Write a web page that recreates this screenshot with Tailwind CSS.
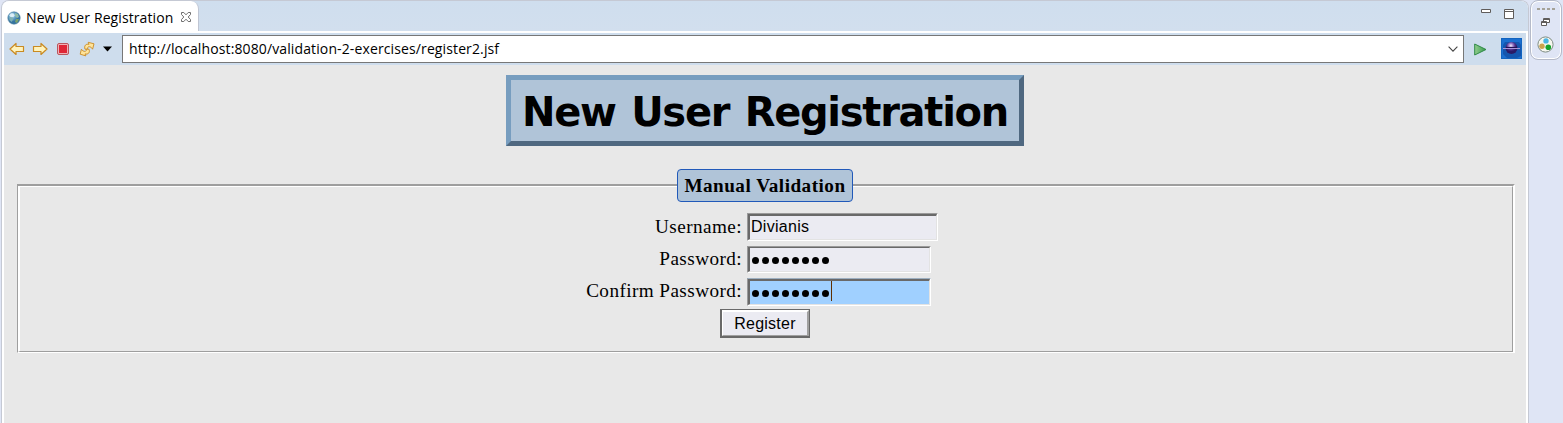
<!DOCTYPE html>
<html lang="en">
<head>
<meta charset="utf-8">
<title>New User Registration</title>
<script src="https://cdn.jsdelivr.net/npm/@tailwindcss/browser@4"></script>
</head>
<body class="h-[423px] w-[1563px] overflow-hidden bg-[#dfe5f5] text-black">
<div class="flex h-full">
  <main class="ml-px h-full w-[1528px] shrink-0 overflow-hidden rounded-t-[8px] border-x border-t border-[#c5c9d4] bg-white">
    <!-- Tab strip -->
    <header class="flex h-[30px] justify-between bg-linear-to-b from-[#cfdeee] to-[#d2dfee]">
      <div class="flex h-[30px] w-[197px] items-center rounded-tr-[8px] border-r border-[#bfc5d3] bg-white pt-[3px] pl-[5px]">
        <svg class="size-[14px] shrink-0" viewBox="0 0 14 14"><defs><radialGradient id="g" cx=".35" cy=".3"><stop offset="0" stop-color="#d8eef9"/><stop offset=".5" stop-color="#6ba6cc"/><stop offset="1" stop-color="#34739f"/></radialGradient></defs><circle cx="7" cy="7" r="6.2" fill="url(#g)" stroke="#4e7f9f" stroke-width=".6"/><path d="M8 2l3 1 1 3-2 1-2-2z" fill="#8fb9a6"/><path d="M2.5 6l3 0 1 2-2 3-2-2z" fill="#7fb0b4"/><path d="M9 8l3 0-2 4-2-1z" fill="#7da36b"/><ellipse cx="5" cy="4.3" rx="2.5" ry="2" fill="#e4f3fa" opacity=".8"/></svg>
        <span id="tab" class="ml-[5px] w-[149px] shrink-0 font-['Open_Sans',sans-serif] text-[14px] leading-[20px] tracking-[0.1px] whitespace-nowrap">New User Registration</span>
        <svg class="-mt-[2px] ml-[5px] size-[12px] shrink-0" viewBox="0 0 12 12" fill="none" stroke="#6e6e6e"><path d="M1.5 1.5h2.3L6 3.8l2.2-2.3h2.3v2L8.2 6l2.3 2.5v2H8.2L6 8.2l-2.2 2.3H1.5v-2L3.8 6 1.5 3.5z"/></svg>
      </div>
      <div class="flex gap-[13px] pt-[8px] pr-[13px]">
        <svg class="h-[12px] w-[10px]" viewBox="0 0 10 12" fill="#fff" stroke="#5f5c5a"><path d="M.5 .5h9v3h-9z"/></svg>
        <svg class="h-[12px] w-[11px]" viewBox="0 0 11 12" fill="#fff" stroke="#5f5c5a"><path d="M.5 .5h9v9H.5zM.5 2.5h9"/></svg>
      </div>
    </header>
    <!-- Address toolbar -->
    <div class="mx-[2px] mt-[2px] flex h-[32px] items-center bg-[#cedded]">
      <svg class="ml-[5px] h-[14px] w-[16px] shrink-0" viewBox="0 0 16 14"><path d="M1 7L7 1.5V4.5H14.5V9.5H7V12.5z" fill="#fff3bb" stroke="#c98a22" stroke-width="1.2" stroke-linejoin="round"/></svg>
      <svg class="ml-[7px] h-[14px] w-[16px] shrink-0" viewBox="0 0 16 14"><path d="M15 7L9 1.5V4.5H1.5V9.5H9V12.5z" fill="#fff3bb" stroke="#c98a22" stroke-width="1.2" stroke-linejoin="round"/></svg>
      <svg class="ml-[9px] size-[12px] shrink-0" viewBox="0 0 12 12"><rect x=".5" y=".5" width="11" height="11" rx="1.5" fill="#efb1b6" stroke="#b9565d"/><rect x="2" y="2" width="8" height="8" fill="#df2636"/></svg>
      <svg class="ml-[10px] size-[16px] shrink-0" viewBox="0 0 16 16" fill="#ffe49a" stroke="#c98a22" stroke-width=".9" stroke-linejoin="round"><path d="M6 8.2C4.8 4.6 7 2.6 10 3.3L9.2 1.3 15 2.8 13.6 8.2 12.2 6.4C9.8 5 8.2 5.8 8.6 8.2z"/><path d="M10 8.2C11.4 11.8 8.8 13.8 6 12.9L6.8 14.9 1.2 13.2 2.4 8.2 3.8 9.8C6 11 7.6 10.4 7.4 8.2z"/></svg>
      <svg class="ml-[7px] h-[6px] w-[11px] shrink-0" viewBox="0 0 11 6"><path d="M1 .5h9L5.5 5.5z"/></svg>
      <div class="ml-[9px] flex h-[28px] w-[1342px] shrink-0 items-center justify-between border border-[#777] bg-white pr-[5px] pl-[6px]">
        <span id="url" class="font-['Open_Sans',sans-serif] text-[14px] leading-[20px] tracking-[0.12px] whitespace-nowrap">http://localhost:8080/validation-2-exercises/register2.jsf</span>
        <svg class="h-[6px] w-[10px]" viewBox="0 0 10 6" fill="none" stroke="#444" stroke-width="1.1"><path d="M.6 .7L5 5.1 9.4 .7"/></svg>
      </div>
      <svg class="ml-[10px] h-[13px] w-[13px] shrink-0" viewBox="0 0 13 13"><defs><linearGradient id="p"><stop stop-color="#94cd8e"/><stop offset="1" stop-color="#359b4d"/></linearGradient></defs><path d="M.7 1L12 6.5.7 12z" fill="url(#p)" stroke="#2f8a47"/></svg>
      <svg class="-mt-[2px] ml-[14px] size-[21px] shrink-0" viewBox="0 0 21 21"><defs><radialGradient id="e" cx=".45" cy=".3"><stop stop-color="#f0eafa"/><stop offset=".35" stop-color="#9a7fca"/><stop offset=".7" stop-color="#4d2f88"/><stop offset="1" stop-color="#2a1a66"/></radialGradient></defs><path d="M0 0h21v21H0z" fill="#1264c0"/><path d="M1 1h19v19H1z" fill="#1a6fd0"/><path d="M4 4h14l2 3v11l-4 2H6l-4-4V7z" fill="#1456ae"/><circle cx="10.5" cy="10" r="6" fill="url(#e)"/><path d="M2 10.5h17" stroke="#a594da"/><path d="M5 9.5h11" stroke="#211152"/></svg>
    </div>
    <!-- Page -->
    <section class="mx-[2px] flex h-[358px] flex-col items-center bg-[#e8e8e8] pt-[10px]">
      <h1 class="flex h-[71px] w-[518px] items-center justify-center border-5 border-t-[#779dbf] border-r-[#4f6880] border-b-[#4f6880] border-l-[#779dbf] bg-[#b0c4d8] pt-[2px] font-['DejaVu_Sans',sans-serif] text-[40px] leading-[48px] font-bold tracking-[-1.28px] [word-spacing:2.8px] whitespace-nowrap"><span id="h">New User Registration</span></h1>
      <div class="z-10 mt-[23px] flex h-[33px] w-[176px] shrink-0 items-center justify-center rounded-[4px] border border-[#2159b9] bg-[#b0c4d8] font-['Liberation_Serif',serif] text-[19.2px] leading-[22px] font-bold tracking-[0.48px] whitespace-nowrap"><span id="leg">Manual Validation</span></div>
      <div class="mt-[-18px] ml-[2px] h-[169px] w-[1498px] shrink-0 border-t-2 border-r-2 border-b border-l border-t-[#9e9e9e] border-r-white border-b-white border-l-[#9e9e9e]">
        <form class="flex h-full flex-col items-center border-t border-r border-b border-l-2 border-t-white border-r-[#9e9e9e] border-b-[#9e9e9e] border-l-white pt-[26px] pr-[2px] font-['Liberation_Serif',serif] text-[19.2px] leading-[22px]">
          <div class="-ml-[2px] grid w-[356px] grid-cols-[156px_191px] gap-x-[5px]">
            <label id="user" class="h-[33px] pt-[3px] text-right tracking-[0.42px]">Username:</label>
            <div class="h-[28px] w-[191px] border border-t-[#9a9a9a] border-r-white border-b-white border-l-[#9a9a9a]"><div class="flex h-full items-center border-t-2 border-r border-b border-l-2 border-t-[#696969] border-r-[#e3e3e3] border-b-[#e3e3e3] border-l-[#696969] bg-[#ebebf2] pb-[2px] pl-px font-['Liberation_Sans',sans-serif] text-[16px] tracking-[0.3px]">Divianis</div></div>
            <label class="h-[32px] pt-[2px] text-right tracking-[0.42px]">Password:</label>
            <div class="h-[27px] w-[184px] border border-t-[#9a9a9a] border-r-white border-b-white border-l-[#9a9a9a]"><div class="flex h-full items-center gap-[3px] border-t border-r border-b border-l-2 border-t-[#696969] border-r-[#e3e3e3] border-b-[#e3e3e3] border-l-[#696969] bg-[#ebebf2] pt-[2px] pl-[2px]"><i class="size-[7px] rounded-full bg-black"></i><i class="size-[7px] rounded-full bg-black"></i><i class="size-[7px] rounded-full bg-black"></i><i class="size-[7px] rounded-full bg-black"></i><i class="size-[7px] rounded-full bg-black"></i><i class="size-[7px] rounded-full bg-black"></i><i class="size-[7px] rounded-full bg-black"></i><i class="size-[7px] rounded-full bg-black"></i></div></div>
            <label class="h-[31px] pt-[2px] text-right tracking-[0.42px] whitespace-nowrap">Confirm Password:</label>
            <div class="h-[28px] w-[184px] border border-t-[#9dafc0] border-r-white border-b-white border-l-[#9a9a9a]"><div class="flex h-full items-center gap-[3px] border-t-2 border-r border-b border-l-2 border-t-[#696969] border-r-[#e3e3e3] border-b-[#e3e3e3] border-l-[#696969] bg-[#a0d0ff] pl-[2px]"><i class="mt-[2px] size-[7px] rounded-full bg-black"></i><i class="mt-[2px] size-[7px] rounded-full bg-black"></i><i class="mt-[2px] size-[7px] rounded-full bg-black"></i><i class="mt-[2px] size-[7px] rounded-full bg-black"></i><i class="mt-[2px] size-[7px] rounded-full bg-black"></i><i class="mt-[2px] size-[7px] rounded-full bg-black"></i><i class="mt-[2px] size-[7px] rounded-full bg-black"></i><i class="mt-[2px] size-[7px] rounded-full bg-black"></i><i class="-ml-[1px] h-[20px] w-px -translate-y-[2px] bg-[#5f2f00]"></i></div></div>
          </div>
          <button type="button" class="h-[29px] w-[90px] shrink-0 border-t border-r border-b-2 border-l-2 border-[#696969] font-['Liberation_Sans',sans-serif] text-[16px] tracking-[0.25px]"><span class="flex h-full items-center justify-center border-t-2 border-r-2 border-b-1 border-l-1 border-t-white border-r-[#a0a0a0] border-b-[#a0a0a0] border-l-white bg-[#ebebf2]">Register</span></button>
        </form>
      </div>
    </section>
  </main>
  <!-- Minimized view bar -->
  <aside class="ml-px flex h-[60px] w-[32px] flex-col items-center rounded-[8px] border border-[#b5bac9] shadow-[inset_0_0_0_1px_white]">
    <svg class="mt-[7px] h-[3px] w-[18px] shrink-0" viewBox="0 0 18 3" fill="#a5a298"><path d="M0 0h3v2H0zM5 0h3v2H5zM10 0h3v2h-3zM15 0h3v2h-3z"/></svg>
    <svg class="mt-[7px] mr-[1px] h-[9px] w-[9px] shrink-0" viewBox="0 0 9 9" fill="#fff" stroke="#5f5c5a"><path d="M2.5 .5h6v4h-6zM2.5 1.5h6"/><path d="M.5 3.5h5v4H.5zM.5 4.5h5"/></svg>
    <svg class="mt-[9px] mr-[1px] size-[17px] shrink-0" viewBox="0 0 17 17"><circle cx="8.5" cy="8.5" r="7.6" fill="#f6f7ef" stroke="#7e8c83"/><circle cx="9" cy="4.9" r="2.7" fill="#4bb5e5"/><circle cx="5" cy="10.2" r="2.7" fill="#cda34d"/><circle cx="11.3" cy="11.2" r="2.8" fill="#17a32d"/></svg>
  </aside>
</div>
</body>
</html>
